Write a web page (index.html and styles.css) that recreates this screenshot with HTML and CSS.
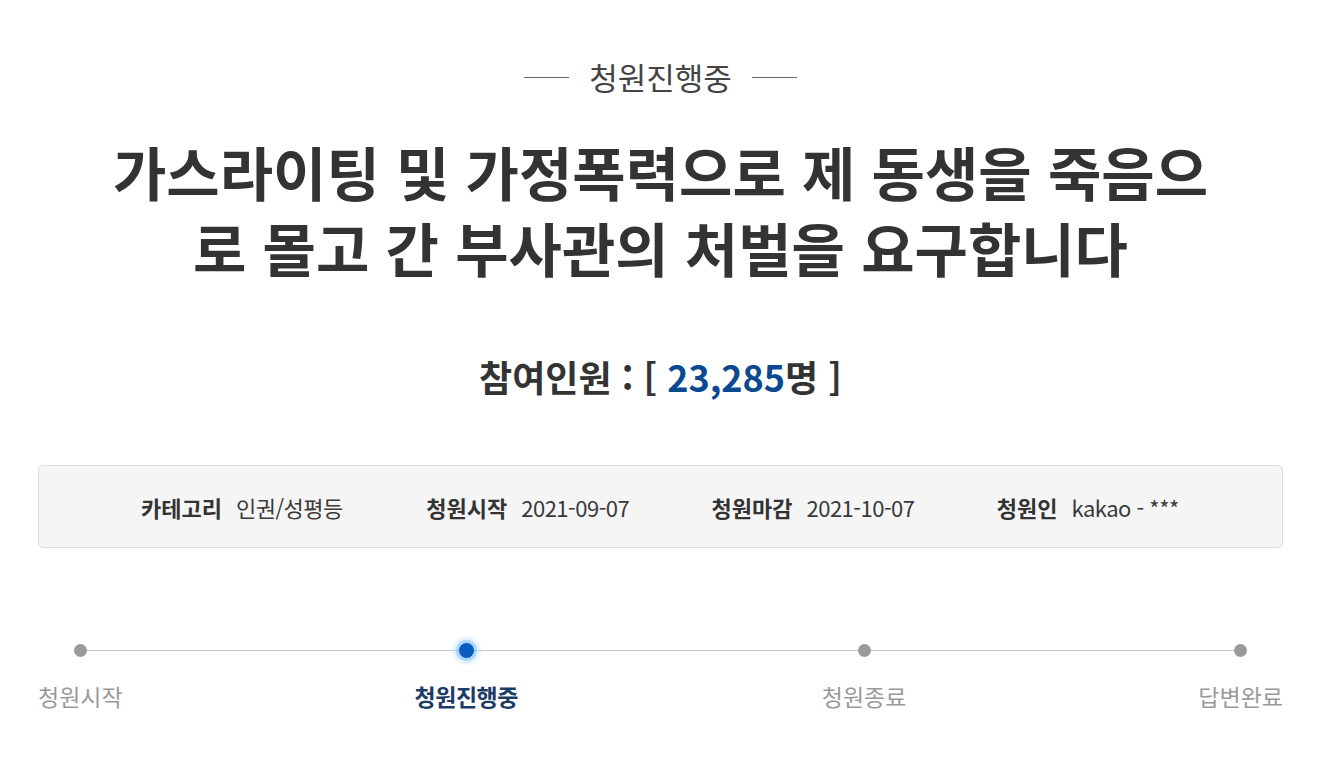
FILE: index.html
```html
<!DOCTYPE html>
<html lang="ko">
<head>
<meta charset="utf-8">
<title>청원진행중</title>
<link rel="stylesheet" href="styles.css">
</head>
<body>
<div class="petition">
  <div class="status"><span class="status-text">청원진행중</span></div>
  <h1 class="title">가스라이팅 및 가정폭력으로 제 동생을 죽음으<br>로 몰고 간 부사관의 처벌을 요구합니다</h1>
  <h2 class="count">참여인원 : [ <span class="count-num">23,285</span>명 ]</h2>
  <ul class="info">
    <li class="info-item"><strong class="info-label">카테고리</strong><span class="info-value">인권/성평등</span></li>
    <li class="info-item"><strong class="info-label">청원시작</strong><span class="info-value">2021-09-07</span></li>
    <li class="info-item"><strong class="info-label">청원마감</strong><span class="info-value">2021-10-07</span></li>
    <li class="info-item"><strong class="info-label">청원인</strong><span class="info-value">kakao - ***</span></li>
  </ul>
  <ol class="steps">
    <li class="step"><span class="dot"></span><span class="step-label">청원시작</span></li>
    <li class="step step-active"><span class="dot"></span><span class="step-label">청원진행중</span></li>
    <li class="step"><span class="dot"></span><span class="step-label">청원종료</span></li>
    <li class="step"><span class="dot"></span><span class="step-label">답변완료</span></li>
  </ol>
</div>
</body>
</html>
```

FILE: styles.css
```css
* { box-sizing: border-box; }

html, body {
  margin: 0;
  padding: 0;
  background: #fff;
}

body {
  font-family: "Noto Sans CJK KR", "Noto Sans", sans-serif;
  color: #333;
}

.petition {
  width: 1245px;
  margin-left: 38px;
  padding-top: 56px;
}

/* status label with rules on both sides */
.status {
  display: flex;
  justify-content: center;
  align-items: center;
  gap: 20px;
  height: 42px;
}
.status::before,
.status::after {
  content: "";
  width: 45px;
  height: 1px;
  background: #666;
}
.status-text {
  font-size: 31px;
  color: #444;
  line-height: 42px;
}

.title {
  margin: 35px 0 0;
  text-align: center;
  font-size: 58px;
  font-weight: 700;
  line-height: 76px;
  color: #333;
}

.count {
  margin: 66px 0 0;
  text-align: center;
  font-size: 36px;
  font-weight: 700;
  line-height: 50px;
  color: #333;
}
.count-num { color: #0b4a8f; }

.info {
  list-style: none;
  margin: 64px 0 0;
  padding: 0 0 0 102px;
  height: 83px;
  display: flex;
  align-items: center;
  background: #f5f5f5;
  border: 1px solid #ddd;
  border-radius: 5px;
}
.info-item {
  width: 287px;
  display: flex;
  align-items: center;
  gap: 14px;
  font-size: 22px;
}
.info-label {
  font-weight: 700;
  color: #333;
}
.info-value {
  color: #3a3a3a;
  letter-spacing: -0.5px;
}

/* progress steps */
.steps {
  list-style: none;
  margin: 93px 0 0;
  padding: 0;
  display: flex;
  justify-content: space-between;
  position: relative;
}
.steps::before {
  content: "";
  position: absolute;
  left: 41px;
  right: 41px;
  top: 9px;
  height: 1px;
  background: #c8c8c8;
}
.step {
  display: flex;
  flex-direction: column;
  align-items: center;
  position: relative;
}
.step-active {
  margin-right: 12px;
}
.dot {
  width: 13px;
  height: 13px;
  margin: 3px 0;
  border-radius: 50%;
  background: #9a9a9a;
  position: relative;
}
.step-label {
  margin-top: 21px;
  font-size: 23px;
  line-height: 30px;
  color: #999;
}
.step-active .dot {
  width: 15px;
  height: 15px;
  margin: 2px 0;
  background: #0a5cbf;
  box-shadow: 0 0 0 3px rgba(110, 180, 245, 0.45), 0 0 3px 6px rgba(170, 215, 250, 0.4);
}
.step-active .step-label {
  color: #1c3b66;
  font-weight: 700;
  letter-spacing: -0.5px;
}
```
